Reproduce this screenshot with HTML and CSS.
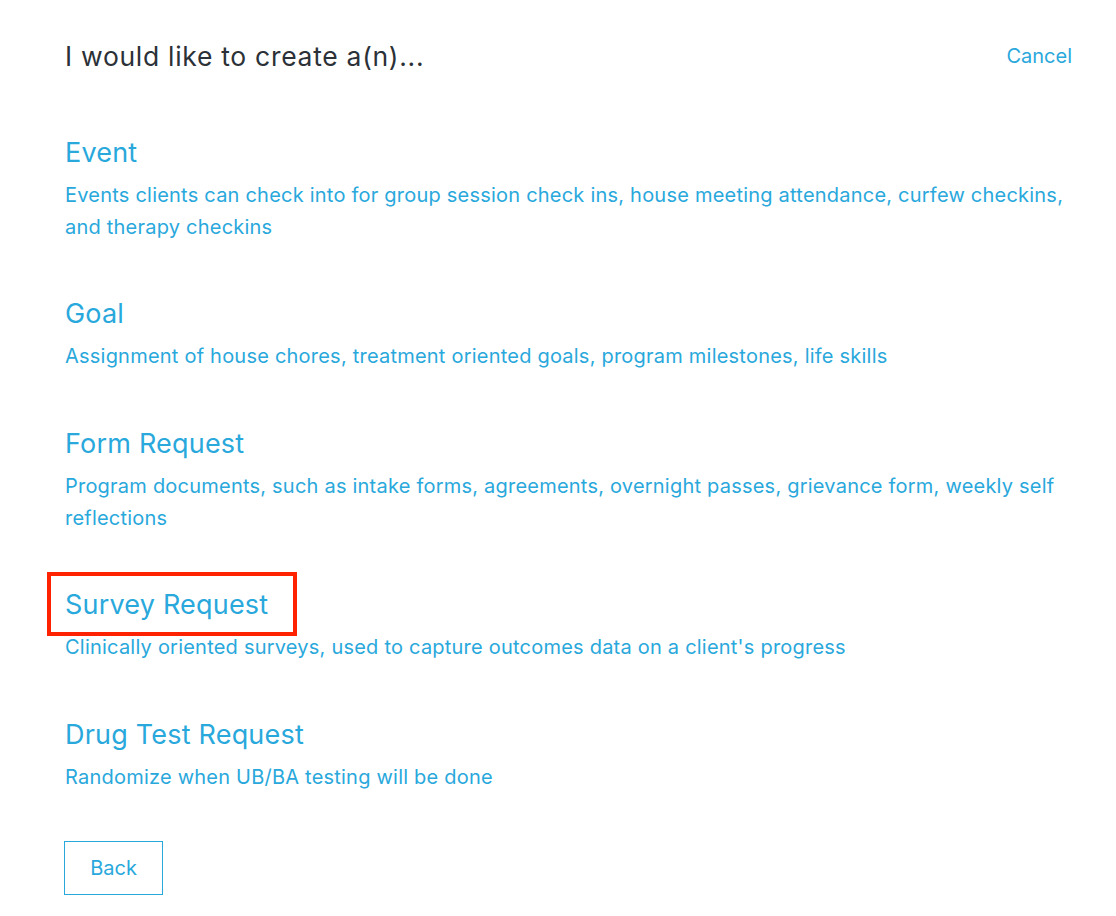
FILE: index.html
```html
<!DOCTYPE html>
<html lang="en">
<head>
<meta charset="utf-8">
<title>Create</title>
<link rel="stylesheet" href="styles.css">
</head>
<body>
<div class="page">
  <header class="top">
    <h1 class="title">I would like to create a(n)...</h1>
    <a class="cancel" href="#">Cancel</a>
  </header>
  <ul class="options">
    <li class="option">
      <h2 class="opt-title">Event</h2>
      <p class="opt-desc">Events clients can check into for group session check ins, house meeting attendance, curfew checkins, and therapy checkins</p>
    </li>
    <li class="option">
      <h2 class="opt-title">Goal</h2>
      <p class="opt-desc">Assignment of house chores, treatment oriented goals, program milestones, life skills</p>
    </li>
    <li class="option">
      <h2 class="opt-title">Form Request</h2>
      <p class="opt-desc">Program documents, such as intake forms, agreements, overnight passes, grievance form, weekly self reflections</p>
    </li>
    <li class="option">
      <h2 class="opt-title highlighted"><span class="hl-box"></span>Survey Request</h2>
      <p class="opt-desc">Clinically oriented surveys, used to capture outcomes data on a client's progress</p>
    </li>
    <li class="option">
      <h2 class="opt-title">Drug Test Request</h2>
      <p class="opt-desc">Randomize when UB/BA testing will be done</p>
    </li>
  </ul>
  <button class="back" type="button">Back</button>
</div>
</body>
</html>
```

FILE: styles.css
```css
* { box-sizing: border-box; }
html, body { margin: 0; padding: 0; background: #fff; }
body {
  font-family: Inter, "Noto Sans", "Liberation Sans", sans-serif;
  color: #29a8dc;
}
.page {
  padding: 38px 44px 0 65px;
}
.top {
  display: flex;
  justify-content: space-between;
  align-items: center;
  height: 36px;
}
.title {
  margin: 0;
  font-size: 26.5px;
  letter-spacing: 0.7px;
  font-weight: 400;
  color: #2b3137;
  line-height: 36px;
}
.cancel {
  font-size: 20px;
  color: #29a8dc;
  text-decoration: none;
  line-height: 36px;
}
.options {
  list-style: none;
  margin: 60.5px 0 0 0;
  padding: 0;
  display: flex;
  flex-direction: column;
  gap: 53.5px;
}
.opt-title {
  margin: 0;
  font-size: 27px;
  letter-spacing: 0.2px;
  font-weight: 400;
  line-height: 36px;
  color: #29a8dc;
}
.highlighted { position: relative; }
.hl-box {
  position: absolute;
  left: -18px;
  top: -15px;
  width: 250px;
  height: 64px;
  border: 4px solid #ff2200;
}
.opt-desc {
  margin: 8px 0 0 0;
  font-size: 20px;
  letter-spacing: 0.22px;
  line-height: 32px;
  color: #29a8dc;
}
.back {
  margin: 48px 0 0 -1px;
  width: 99px;
  height: 54px;
  background: #fff;
  border: 1px solid #29a8dc;
  color: #29a8dc;
  font-family: inherit;
  font-size: 20px;
  border-radius: 0;
  padding: 0;
}
```
